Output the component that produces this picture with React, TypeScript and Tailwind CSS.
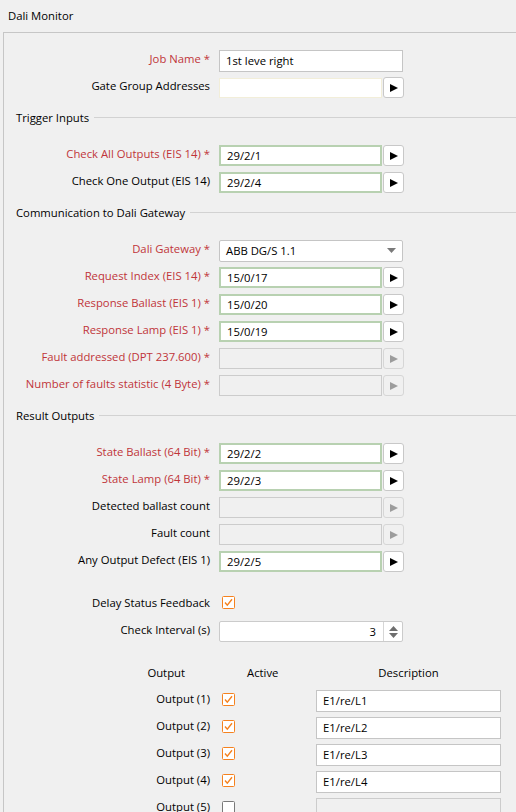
import React from 'react';

const RED = 'text-[#c0353a]';

const Arrow = ({ disabled = false }: { disabled?: boolean }) => (
  <svg width="8" height="8" viewBox="0 0 8 8">
    <polygon points="0,0 8,4 0,8" fill={disabled ? '#9c9c9c' : '#000000'} />
  </svg>
);

const Check = ({ checked }: { checked: boolean }) => (
  <svg width="13" height="13" viewBox="0 0 13 13">
    <rect x="0.5" y="0.5" width="12" height="12" rx="1" fill="white" stroke={checked ? '#f5821f' : '#7a7a7a'} />
    {checked && <polyline points="3,6.5 5.3,9.2 10,3.2" fill="none" stroke="#f5821f" strokeWidth="1.4" />}
  </svg>
);

// label column ends at x=210, fields start at x=219
const Row = ({
  label,
  required = false,
  lift = true,
  children,
}: {
  label: string;
  required?: boolean;
  lift?: boolean;
  children: React.ReactNode;
}) => (
  <div className="flex h-[27px] items-center">
    <div className={`w-[206px] text-right ${lift ? 'pb-[4px]' : ''} ${required ? RED : 'text-black'}`}>
      {label}
      {required && ' *'}
    </div>
    <div className="ml-[9px] flex items-center">{children}</div>
  </div>
);

const Address = ({ value, disabled = false }: { value?: string; disabled?: boolean }) => (
  <>
    {disabled ? (
      <div className="h-[21px] w-[163px] border border-[#cccccc] bg-[#f0f0f0]" />
    ) : (
      <div className="flex h-[21px] w-[163px] items-center border-2 border-[#b8d1b1] bg-white pl-[6px] text-black">
        {value}
      </div>
    )}
    <div
      className={`ml-[1px] flex h-[21px] w-[21px] items-center justify-center rounded-[3px] border ${
        disabled ? 'border-[#d6d6d6] bg-[#f0f0f0]' : 'border-[#c8c8c8] bg-white'
      }`}
    >
      <Arrow disabled={disabled} />
    </div>
  </>
);

const Header = ({ title }: { title: string }) => (
  <div className="mt-[8px] flex h-[20px] items-center pl-3">
    <span className="pb-[2px] text-black">{title}</span>
    <div className="ml-[5px] mb-[3px] h-px flex-1 bg-[#d2d2d2]" />
  </div>
);

const outputs = [
  { n: 1, on: true, desc: 'E1/re/L1' },
  { n: 2, on: true, desc: 'E1/re/L2' },
  { n: 3, on: true, desc: 'E1/re/L3' },
  { n: 4, on: true, desc: 'E1/re/L4' },
  { n: 5, on: false, desc: '' },
];

export default function App() {
  return (
    <div className="h-[812px] w-[516px] overflow-hidden bg-[#f0f0f0] font-['Open_Sans',sans-serif] text-[11.3px] font-medium leading-none">
      <div className="flex h-8 items-center pl-2 text-black">Dali Monitor</div>

      <div className="ml-[3px] border-l border-t border-[#c6c6c6] pt-[14px]">
        <Row label="Job Name" required>
          <div className="flex h-[22px] w-[184px] items-center border border-[#c5c5c5] bg-white pl-[6px] text-black">
            1st leve right
          </div>
        </Row>
        <Row label="Gate Group Addresses">
          <div className="h-[20px] w-[163px] border border-[#f2eed9] bg-white" />
          <div className="ml-[1px] flex h-[21px] w-[21px] items-center justify-center rounded-[3px] border border-[#c8c8c8] bg-white">
            <Arrow />
          </div>
        </Row>

        <Header title="Trigger Inputs" />
        <div className="mt-[13px]">
          <Row label="Check All Outputs (EIS 14)" required>
            <Address value="29/2/1" />
          </Row>
          <Row label="Check One Output (EIS 14)">
            <Address value="29/2/4" />
          </Row>
        </div>

        <Header title="Communication to Dali Gateway" />
        <div className="mt-[13px]">
          <Row label="Dali Gateway" required>
            <div className="flex h-[22px] w-[184px] items-center justify-between rounded-[2px] border border-[#c5c5c5] bg-white pl-[6px] pr-[6px] text-black">
              <span>ABB DG/S 1.1</span>
              <svg width="9" height="5" viewBox="0 0 9 5">
                <polygon points="0,0 9,0 4.5,5" fill="#7a7a7a" />
              </svg>
            </div>
          </Row>
          <Row label="Request Index (EIS 14)" required>
            <Address value="15/0/17" />
          </Row>
          <Row label="Response Ballast (EIS 1)" required>
            <Address value="15/0/20" />
          </Row>
          <Row label="Response Lamp (EIS 1)" required>
            <Address value="15/0/19" />
          </Row>
          <Row label="Fault addressed (DPT 237.600)" required>
            <Address disabled />
          </Row>
          <Row label="Number of faults statistic (4 Byte)" required>
            <Address disabled />
          </Row>
        </div>

        <Header title="Result Outputs" />
        <div className="mt-[13px]">
          <Row label="State Ballast (64 Bit)" required>
            <Address value="29/2/2" />
          </Row>
          <Row label="State Lamp (64 Bit)" required>
            <Address value="29/2/3" />
          </Row>
          <Row label="Detected ballast count">
            <Address disabled />
          </Row>
          <Row label="Fault count">
            <Address disabled />
          </Row>
          <Row label="Any Output Defect (EIS 1)">
            <Address value="29/2/5" />
          </Row>
        </div>

        <div className="mt-[14px]">
          <Row label="Delay Status Feedback" lift={false}>
            <div className="pl-[3px]">
              <Check checked />
            </div>
          </Row>
        </div>
        <div className="mt-[2px]">
          <Row label="Check Interval (s)">
            <div className="flex h-[21px] w-[184px] rounded-[2px] border border-[#cbcbcb] bg-white">
              <div className="flex flex-1 items-center justify-end pr-[7px] text-black">3</div>
              <div className="flex w-[19px] flex-col items-center justify-center gap-[2px] border-l border-[#d6d6d6]">
                <svg width="9" height="5" viewBox="0 0 9 5">
                  <polygon points="0,5 9,5 4.5,0" fill="#6e6e6e" />
                </svg>
                <svg width="9" height="5" viewBox="0 0 9 5">
                  <polygon points="0,0 9,0 4.5,5" fill="#6e6e6e" />
                </svg>
              </div>
            </div>
          </Row>
        </div>

        {/* outputs table */}
        <div className="mt-[14px] flex h-[27px] items-center text-black">
          <div className="w-[206px] pr-[25px] text-right">Output</div>
          <div className="ml-[9px] w-[97px] pl-[28px]">Active</div>
          <div className="w-[185px] text-center">Description</div>
        </div>
        <div className="mt-px">
          {outputs.map((o) => (
            <div key={o.n} className="flex h-[27px] items-center">
              <div className="w-[206px] pb-[3px] text-right text-black">Output ({o.n})</div>
              <div className="ml-[9px] w-[97px] pb-[3px] pl-[3px]">
                <Check checked={o.on} />
              </div>
              {o.on ? (
                <div className="flex h-[22px] w-[185px] items-center border border-[#c5c5c5] bg-white pl-[6px] text-black">
                  {o.desc}
                </div>
              ) : (
                <div className="h-[22px] w-[185px] border border-[#cccccc] bg-[#f0f0f0]" />
              )}
            </div>
          ))}
        </div>
      </div>
    </div>
  );
}
